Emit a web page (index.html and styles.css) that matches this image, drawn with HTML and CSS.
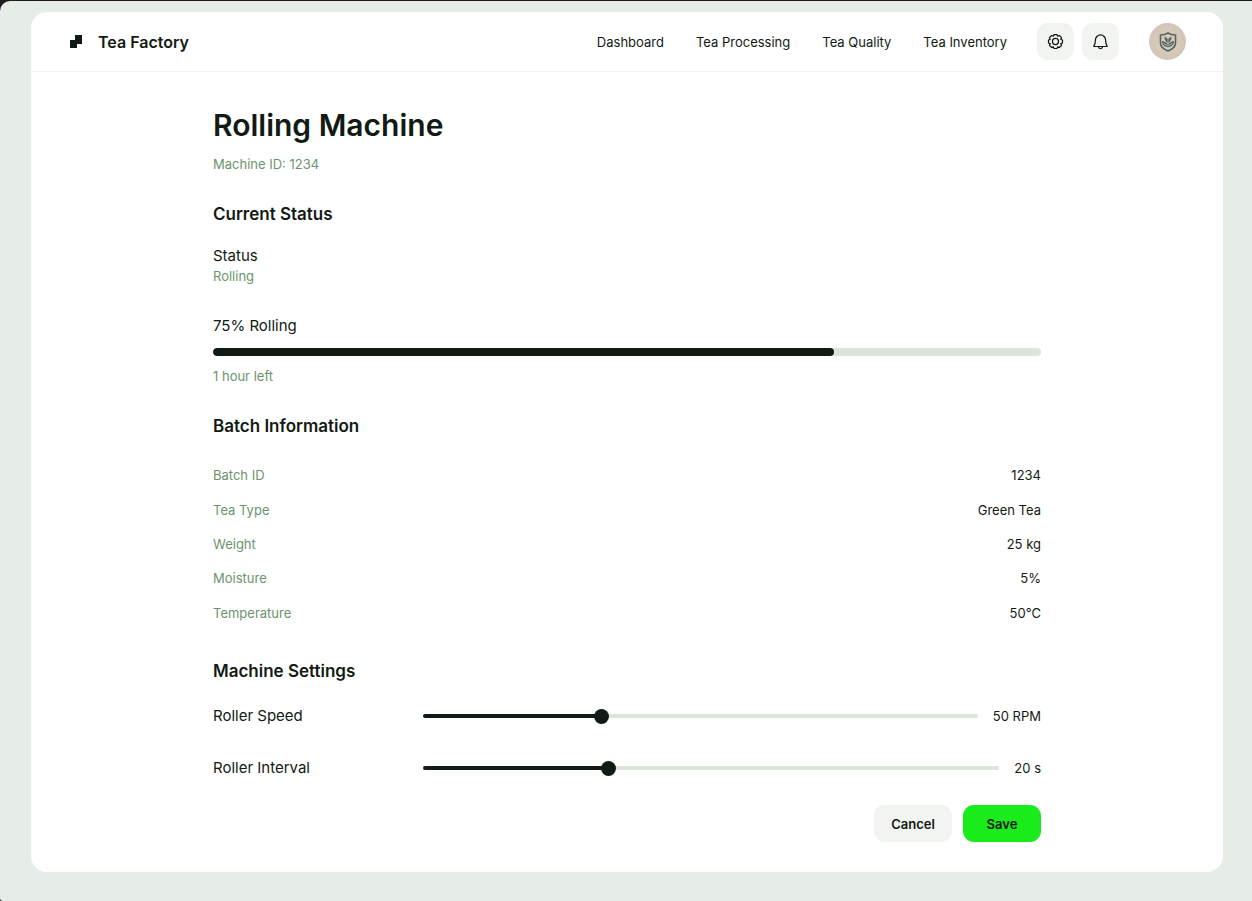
FILE: index.html
```html
<!DOCTYPE html>
<html lang="en">
<head>
<meta charset="utf-8">
<meta name="viewport" content="width=device-width, initial-scale=1">
<title>Rolling Machine - Tea Factory</title>
<link rel="stylesheet" href="styles.css">
</head>
<body>
<div class="page">
  <div class="card">
    <header class="topbar">
      <a class="brand" href="#">
        <svg class="brand-mark" viewBox="0 0 12 13" aria-hidden="true"><path d="M5 0h7v9H7v4H0V5h5z"/></svg>
        <span>Tea Factory</span>
      </a>
      <nav class="nav">
        <a href="#">Dashboard</a>
        <a href="#">Tea Processing</a>
        <a href="#">Tea Quality</a>
        <a href="#">Tea Inventory</a>
      </nav>
      <div class="actions">
        <button class="icon-button" type="button" aria-label="Settings">
          <svg class="icon" viewBox="0 0 18 18" aria-hidden="true"><circle cx="9" cy="9" r="3.200"/><path d="M16.400 7.400V10.600L14.600 11.300 15.400 13.100 13.100 15.400 11.300 14.600 10.600 16.400H7.400L6.700 14.600 4.900 15.400 2.600 13.100 3.400 11.300 1.600 10.600V7.400L3.400 6.700 2.600 4.900 4.900 2.600 6.700 3.400 7.400 1.600H10.600L11.300 3.400 13.100 2.600 15.400 4.900 14.600 6.700z"/></svg>
        </button>
        <button class="icon-button" type="button" aria-label="Notifications">
          <svg class="icon" viewBox="0 0 18 18" aria-hidden="true"><path d="M2 13.700c1-1.200 1.600-2.900 1.600-6.200a5.400 5.400 0 0 1 10.800 0c0 3.300.6 5 1.600 6.200.2.300 0 .6-.3.600H2.300c-.3 0-.5-.3-.3-.6zM6.800 14.500c.3 2.700 4.100 2.700 4.400 0"/></svg>
        </button>
      </div>
      <button class="avatar" type="button" aria-label="Account">
        <svg class="crest" viewBox="0 0 18 20" aria-hidden="true">
          <path class="crest-line" d="M9 1c2.200 1.400 4.800 2 7.500 2v8c0 3.800-3.500 6.400-7.500 8-4-1.600-7.500-4.200-7.500-8V3C4.200 3 6.800 2.400 9 1z"/>
          <path class="crest-leaf" d="M5.600 4.500 9 7l3.400-2.500c.5 3-.8 5-3.400 6.500-2.600-1.500-3.900-3.500-3.400-6.500zM3 9c2.800.4 4.800 1.500 6 3.800C10.200 10.500 12.200 9.400 15 9c.2 3.500-2.200 5.600-6 6.200C5.200 14.600 2.800 12.500 3 9z"/>
          <path class="crest-vein" d="M9 5.500v4M4.600 11.500 9 14l4.400-2.500"/>
        </svg>
      </button>
    </header>

    <main class="content">
      <h1 class="title">Rolling Machine</h1>
      <p class="muted machine-id">Machine ID: 1234</p>

      <h2 class="heading">Current Status</h2>
      <div class="status">
        <p class="label">Status</p>
        <p class="muted">Rolling</p>
      </div>
      <div class="progress-block">
        <label class="label" for="rolling">75% Rolling</label>
        <progress class="progress" id="rolling" max="100" value="75"></progress>
        <p class="muted">1 hour left</p>
      </div>

      <h2 class="heading">Batch Information</h2>
      <dl class="facts">
        <div class="fact"><dt>Batch ID</dt><dd>1234</dd></div>
        <div class="fact"><dt>Tea Type</dt><dd>Green Tea</dd></div>
        <div class="fact"><dt>Weight</dt><dd>25 kg</dd></div>
        <div class="fact"><dt>Moisture</dt><dd>5%</dd></div>
        <div class="fact"><dt>Temperature</dt><dd>50°C</dd></div>
      </dl>

      <h2 class="heading">Machine Settings</h2>
      <form class="settings">
        <div class="setting">
          <label class="label" for="speed">Roller Speed</label>
          <input class="slider" id="speed" type="range" min="0" max="158" value="50">
          <output for="speed">50 RPM</output>
        </div>
        <div class="setting">
          <label class="label" for="interval">Roller Interval</label>
          <input class="slider" id="interval" type="range" min="0" max="63" value="20">
          <output for="interval">20 s</output>
        </div>
        <div class="buttons">
          <button class="button" type="button">Cancel</button>
          <button class="button primary" type="button">Save</button>
        </div>
      </form>
    </main>
  </div>
</div>
</body>
</html>
```
FILE: styles.css
```css
* {
  box-sizing: border-box;
}

body {
  margin: 0;
  background: #1f1b20;
  color: #121a14;
  font: 400 13px/20px Inter, "Liberation Sans", sans-serif;
}

h1, h2, p, dl, dd {
  margin: 0;
}

button {
  padding: 0;
  border: 0;
  font: inherit;
  color: inherit;
  cursor: pointer;
}

a {
  color: inherit;
  text-decoration: none;
}

.page {
  min-height: calc(100vh - 1px);
  margin-top: 1px;
  padding: 11px 29px 29px 31px;
  border-radius: 10px 0 0 3px;
  background: #e6ede6;
}

.card {
  border-radius: 16px;
  background: #fff;
}

.topbar {
  display: flex;
  align-items: center;
  height: 60px;
  padding: 0 37px 0 39px;
  border-bottom: 1px solid #f2f4f2;
}

.brand {
  display: flex;
  align-items: center;
  gap: 16px;
  margin-right: auto;
  font-size: 16px;
  font-weight: 600;
}

.brand-mark {
  width: 12px;
  height: 13px;
  fill: #121a14;
}

.nav {
  display: flex;
  gap: 32px;
}

.actions {
  display: flex;
  gap: 8px;
  margin: 0 30px;
}

.icon-button {
  display: grid;
  place-items: center;
  width: 37px;
  height: 37px;
  border-radius: 11px;
  background: #f1f4f1;
}

.icon {
  width: 17px;
  height: 17px;
  fill: none;
  stroke: #121a14;
  stroke-width: 1.3;
  stroke-linejoin: round;
}

.avatar {
  display: grid;
  place-items: center;
  width: 37px;
  height: 37px;
  border-radius: 50%;
  background: radial-gradient(circle, #d8cabb 35%, #cdc1b4 100%);
}

.crest {
  width: 18px;
  height: 20px;
}

.crest-line {
  fill: none;
  stroke: #4d6660;
  stroke-width: 1.6;
}

.crest-leaf {
  fill: #4d6660;
}

.crest-vein {
  fill: none;
  stroke: #b9b4a6;
  stroke-width: 1;
}

.content {
  width: 100%;
  max-width: 868px;
  margin: 0 auto;
  padding: 33px 20px 30px;
}

.title {
  font-size: 30px;
  font-weight: 600;
  line-height: 40px;
}

.machine-id {
  margin-top: 9px;
}

.muted, .fact dt {
  color: #6b946e;
}

.heading {
  margin-top: 30px;
  font-size: 17px;
  font-weight: 600;
  line-height: 20px;
}

.label {
  font-size: 15px;
}

.status {
  margin-top: 22px;
}

.progress-block {
  display: grid;
  margin-top: 30px;
}

.progress {
  appearance: none;
  width: 100%;
  height: 8px;
  margin: 12px 0 10px;
  border: 0;
  border-radius: 4px;
  overflow: hidden;
  background: #dce5dc;
}

.progress::-webkit-progress-bar {
  background: #dce5dc;
}

.progress::-webkit-progress-value {
  border-radius: 4px;
  background: #121a14;
}

.facts {
  display: grid;
  grid-auto-rows: 1fr;
  min-height: 172px;
  margin: 22px 0 31px;
}

.fact {
  display: flex;
  align-items: center;
  justify-content: space-between;
}

.settings {
  display: grid;
  gap: 32px;
  margin-top: 25px;
}

.setting {
  display: flex;
  align-items: center;
}

.setting .label {
  width: 210px;
}

.slider {
  appearance: none;
  flex: 1;
  min-width: 0;
  height: 4px;
  margin: 0 15px 0 0;
  border-radius: 2px;
  background: linear-gradient(to right, #121a14 32%, #dce5dc 32%);
}

.slider::-webkit-slider-thumb {
  appearance: none;
  width: 15px;
  height: 15px;
  border-radius: 50%;
  background: #121a14;
}

.buttons {
  display: flex;
  justify-content: flex-end;
  gap: 11px;
  margin-top: -5px;
}

.button {
  width: 78px;
  height: 37px;
  border-radius: 11px;
  background: #f1f4f1;
  font-weight: 600;
}

.primary {
  background: #1aeb1a;
}
```
